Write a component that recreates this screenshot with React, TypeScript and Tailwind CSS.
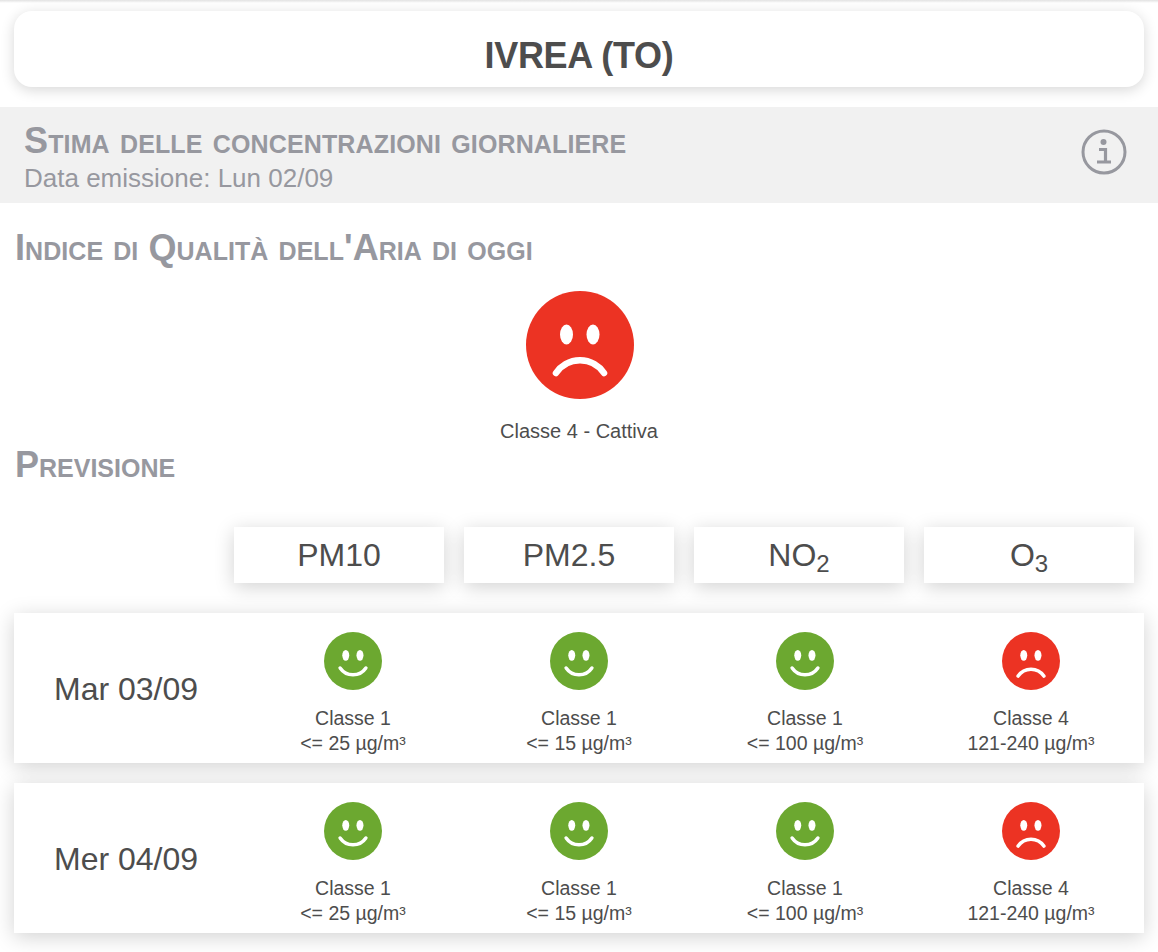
function Face({ good, size, className = '' }: { good: boolean; size: number; className?: string }) {
  return (
    <svg width={size} height={size} viewBox="0 0 108 108" className={`block shrink-0 ${className}`}>
      <circle cx="54" cy="54" r="54" fill={good ? '#6ca830' : '#ec3323'} />
      <ellipse cx="40.5" cy="43.5" rx="6.5" ry="10" fill="#fff" />
      <ellipse cx="67" cy="43.5" rx="6.5" ry="10" fill="#fff" />
      {good ? (
        <path d="M30 67 A 29 29 0 0 0 78 67" fill="none" stroke="#fff" strokeWidth="6.5" strokeLinecap="round" />
      ) : (
        <path d="M30 82 A 29 29 0 0 1 78 82" fill="none" stroke="#fff" strokeWidth="6.5" strokeLinecap="round" />
      )}
    </svg>
  );
}

function InfoIcon() {
  return (
    <svg width="46" height="46" viewBox="0 0 46 46" className="mb-[6px] block">
      <circle cx="23" cy="23" r="21" fill="none" stroke="#97989f" strokeWidth="3" />
      <circle cx="22.5" cy="13" r="3" fill="#97989f" />
      <path d="M18 20.5 H24.5 V32 M16 33 H30" fill="none" stroke="#97989f" strokeWidth="3.2" />
    </svg>
  );
}

const pollutants = [
  { name: 'PM10', sub: '' },
  { name: 'PM2.5', sub: '' },
  { name: 'NO', sub: '2' },
  { name: 'O', sub: '3' },
];

const rows = [
  { day: 'Mar 03/09', top: 'mt-[30px]' },
  { day: 'Mer 04/09', top: 'mt-5' },
];

const cells = [
  { good: true, cls: 'Classe 1', range: '<= 25 µg/m³' },
  { good: true, cls: 'Classe 1', range: '<= 15 µg/m³' },
  { good: true, cls: 'Classe 1', range: '<= 100 µg/m³' },
  { good: false, cls: 'Classe 4', range: '121-240 µg/m³' },
];

export default function App() {
  return (
    <div className="min-h-[952px] w-[1158px] bg-white font-['Liberation_Sans',Arial,sans-serif] text-[#4d4d4d]">
      <div className="h-[3px] bg-gradient-to-b from-[#e2e2e2] to-white" />

      {/* Titolo */}
      <div className="mx-[14px] mt-2 flex h-[76px] items-center justify-center rounded-[18px] bg-white pt-[14px] shadow-[0_3px_14px_rgba(0,0,0,0.16)]">
        <h1 className="text-[36px] font-bold tracking-[-0.3px]">IVREA (TO)</h1>
      </div>

      {/* Stima */}
      <div className="mt-5 flex h-24 items-center justify-between bg-[#f1f1f1] pl-6 pr-[31px] text-[#97989f]">
        <div className="self-start pt-[15px]">
          <div className="text-[36px] leading-[38px] font-bold tracking-[0.14px] [font-variant:small-caps]">Stima delle concentrazioni giornaliere</div>
          <div className="mt-[4px] text-[26px] leading-7">Data emissione: Lun 02/09</div>
        </div>
        <InfoIcon />
      </div>

      <h2 className="mt-[25px] ml-[15px] text-[36px] leading-[40px] font-bold tracking-[0.06px] text-[#97989f] [font-variant:small-caps]">Indice di Qualità dell'Aria di oggi</h2>

      <div className="mt-[23px] flex flex-col items-center">
        <Face good={false} size={108} className="ml-[2px]" />
        <div className="mt-[20px] text-[20px] leading-[24px]">Classe 4 - Cattiva</div>
      </div>

      <h2 className="mt-[2px] ml-[15px] text-[36px] leading-[40px] font-bold text-[#97989f] [font-variant:small-caps]">Previsione</h2>

      {/* Intestazioni inquinanti */}
      <div className="mt-[42px] ml-[234px] flex gap-5">
        {pollutants.map((p) => (
          <div key={p.name} className="flex h-14 w-[210px] items-center justify-center bg-white text-[32px] shadow-[0_4px_20px_rgba(0,0,0,0.18)]">
            <span>
              {p.name}
              {p.sub && <sub className="text-[24px]">{p.sub}</sub>}
            </span>
          </div>
        ))}
      </div>

      {rows.map((row) => (
        <div key={row.day} className={`mx-[14px] flex h-[150px] bg-white shadow-[0_4px_20px_rgba(0,0,0,0.18)] ${row.top}`}>
          <div className="flex w-[226px] items-center pt-[1px] pl-10 text-[32px]">{row.day}</div>
          {cells.map((c, i) => (
            <div key={i} className="flex w-[226px] flex-col items-center pt-[19px]">
              <Face good={c.good} size={58} />
              <div className="mt-[16px] text-[19.5px] leading-[24px]">{c.cls}</div>
              <div className="mt-[1px] text-[19.5px] leading-[24px]">{c.range}</div>
            </div>
          ))}
        </div>
      ))}
    </div>
  );
}
